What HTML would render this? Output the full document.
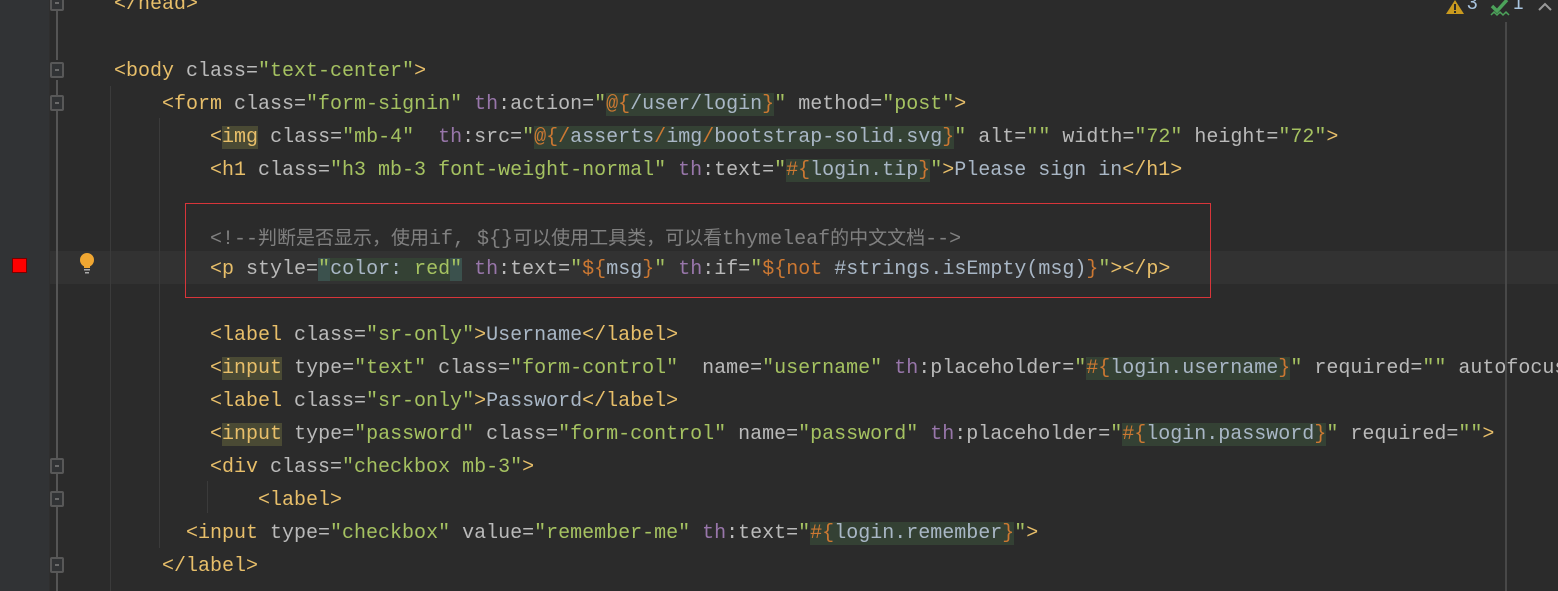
<!DOCTYPE html>
<html style="overflow:hidden;height:591px"><head><meta charset="utf-8"><style>
html,body{overflow:hidden}
body{margin:0;width:1558px;height:591px;overflow:hidden;background:#2b2b2b;position:relative;font-family:"Liberation Mono","Noto Sans CJK SC",monospace;font-size:20px;}
.g{position:absolute;left:0;top:0;width:49px;height:591px;background:#313335;}
.sep{position:absolute;left:49px;top:0;width:1px;height:591px;background:#2f2f2f;}
.cur{position:absolute;left:50px;top:251px;width:1508px;height:33px;background:#323232;}
.l{position:absolute;left:114px;height:33px;line-height:33px;white-space:pre;color:#a9b7c6;margin-top:2px}
.t{color:#e8bf6a}.a{color:#bababa}.s{color:#a5c261}.n{color:#9876aa}.o{color:#cc7832}.c{color:#808080}
.e{background:#344134}.h{background:#4a4a34}.q{background:#3b514d}
.cj{font-family:"Noto Sans CJK SC",sans-serif;font-size:19px}
.ig{position:absolute;width:1px;background:#3b3b3b}
.fold{position:absolute;left:50px;width:14px;height:16px;border:2px solid #585858;border-radius:2px;box-sizing:border-box;background:#313335}
.fold:after{content:"";position:absolute;left:3px;top:5px;width:4px;height:2px;background:#6a6a6a}
.fl{position:absolute;left:56px;width:2px;background:#555}
.box{position:absolute;left:185px;top:203px;width:1026px;height:95px;border:1px solid #d8353a;box-sizing:border-box}
</style></head><body>
<div class="g"></div><div class="sep"></div>
<div class="cur"></div>
<div class="fl" style="top:10px;height:50px"></div>
<div class="fl" style="top:80px;height:511px"></div>
<div class="fold" style="top:-5px"></div>
<div class="fold" style="top:62px"></div>
<div class="fold" style="top:95px"></div>
<div class="fold" style="top:458px"></div>
<div class="fold" style="top:491px"></div>
<div class="fold" style="top:557px"></div>
<div class="ig" style="left:110px;top:86px;height:505px"></div>
<div class="ig" style="left:159px;top:118px;height:430px"></div>
<div class="ig" style="left:207px;top:481px;height:32px"></div>
<div style="position:absolute;left:12px;top:258px;width:15px;height:15px;background:#f00;border:1px solid #700;box-sizing:border-box"></div>
<svg style="position:absolute;left:78px;top:252px" width="20" height="24" viewBox="0 0 20 24"><circle cx="9" cy="8" r="7" fill="#f0a732"/><rect x="6" y="13" width="6" height="3" fill="#f0a732"/><rect x="6" y="17" width="6" height="1.5" fill="#aaa"/><rect x="7" y="20" width="4" height="1.5" fill="#aaa"/></svg>
<div class="box"></div>
<div style="position:absolute;left:1505px;top:22px;width:2px;height:569px;background:#484848"></div>
<svg style="position:absolute;left:1446px;top:0" width="18" height="15"><polygon points="9,0 18,14 0,14" fill="#c99a1e"/><rect x="8" y="4" width="2" height="6" fill="#2b2b2b"/><rect x="8" y="11" width="2" height="2" fill="#2b2b2b"/></svg>
<div style="position:absolute;left:1467px;top:-7px;color:#a9c4df;font-family:'Liberation Sans',sans-serif;font-size:19px">3</div>
<svg style="position:absolute;left:1490px;top:0" width="20" height="18"><path d="M2 6 L7 11 L17 0" stroke="#4ca25a" stroke-width="3.5" fill="none"/><path d="M1 15 l3-3 3 3 3-3 3 3 3-3 3 3" stroke="#4ca25a" stroke-width="1.5" fill="none"/></svg>
<div style="position:absolute;left:1513px;top:-7px;color:#a9c4df;font-family:'Liberation Sans',sans-serif;font-size:19px">1</div>
<svg style="position:absolute;left:1538px;top:2px" width="14" height="10"><path d="M1 8 L7 2 L13 8" stroke="#999" stroke-width="2" fill="none"/></svg>

<div class="l" style="top:-14px"><span class="t">&lt;/head&gt;</span></div>
<div class="l" style="top:53px"><span class="t">&lt;body </span><span class="a">class=</span><span class="s">"text-center"</span><span class="t">&gt;</span></div>
<div class="l" style="top:86px">    <span class="t">&lt;form </span><span class="a">class=</span><span class="s">"form-signin" </span><span class="n">th</span><span class="a">:action=</span><span class="s">"</span><span class="e"><span class="o">@{</span>/user/login<span class="o">}</span></span><span class="s">" </span><span class="a">method=</span><span class="s">"post"</span><span class="t">&gt;</span></div>
<div class="l" style="top:119px">        <span class="t">&lt;<span class="h">img</span> </span><span class="a">class=</span><span class="s">"mb-4"  </span><span class="n">th</span><span class="a">:src=</span><span class="s">"</span><span class="e"><span class="o">@{/</span>asserts<span class="o">/</span>img<span class="o">/</span>bootstrap-solid.svg<span class="o">}</span></span><span class="s">" </span><span class="a">alt=</span><span class="s">"" </span><span class="a">width=</span><span class="s">"72" </span><span class="a">height=</span><span class="s">"72"</span><span class="t">&gt;</span></div>
<div class="l" style="top:152px">        <span class="t">&lt;h1 </span><span class="a">class=</span><span class="s">"h3 mb-3 font-weight-normal" </span><span class="n">th</span><span class="a">:text=</span><span class="s">"</span><span class="e"><span class="o">#{</span>login.tip<span class="o">}</span></span><span class="s">"</span><span class="t">&gt;</span>Please sign in<span class="t">&lt;/h1&gt;</span></div>
<div class="l c" style="top:218px">        &lt;!--<span class="cj">判断是否显示，使用</span>if, ${}<span class="cj">可以使用工具类，可以看</span>thymeleaf<span class="cj">的中文文档</span>--&gt;</div>
<div class="l" style="top:251px">        <span class="t">&lt;p </span><span class="a">style=</span><span class="q s">"</span><span class="e">color: <span class="s">red</span></span><span class="q s">"</span> <span class="n">th</span><span class="a">:text=</span><span class="s">"</span><span class="o">${</span>msg<span class="o">}</span><span class="s">" </span><span class="n">th</span><span class="a">:if=</span><span class="s">"</span><span class="o">${not </span>#strings.isEmpty(msg)<span class="o">}</span><span class="s">"</span><span class="t">&gt;&lt;/p&gt;</span></div>
<div class="l" style="top:317px">        <span class="t">&lt;label </span><span class="a">class=</span><span class="s">"sr-only"</span><span class="t">&gt;</span>Username<span class="t">&lt;/label&gt;</span></div>
<div class="l" style="top:350px">        <span class="t">&lt;<span class="h">input</span> </span><span class="a">type=</span><span class="s">"text" </span><span class="a">class=</span><span class="s">"form-control"  </span><span class="a">name=</span><span class="s">"username" </span><span class="n">th</span><span class="a">:placeholder=</span><span class="s">"</span><span class="e"><span class="o">#{</span>login.username<span class="o">}</span></span><span class="s">" </span><span class="a">required=</span><span class="s">"" </span><span class="a">autofocus</span></div>
<div class="l" style="top:383px">        <span class="t">&lt;label </span><span class="a">class=</span><span class="s">"sr-only"</span><span class="t">&gt;</span>Password<span class="t">&lt;/label&gt;</span></div>
<div class="l" style="top:416px">        <span class="t">&lt;<span class="h">input</span> </span><span class="a">type=</span><span class="s">"password" </span><span class="a">class=</span><span class="s">"form-control" </span><span class="a">name=</span><span class="s">"password" </span><span class="n">th</span><span class="a">:placeholder=</span><span class="s">"</span><span class="e"><span class="o">#{</span>login.password<span class="o">}</span></span><span class="s">" </span><span class="a">required=</span><span class="s">""</span><span class="t">&gt;</span></div>
<div class="l" style="top:449px">        <span class="t">&lt;div </span><span class="a">class=</span><span class="s">"checkbox mb-3"</span><span class="t">&gt;</span></div>
<div class="l" style="top:482px">            <span class="t">&lt;label&gt;</span></div>
<div class="l" style="top:515px">      <span class="t">&lt;input </span><span class="a">type=</span><span class="s">"checkbox" </span><span class="a">value=</span><span class="s">"remember-me" </span><span class="n">th</span><span class="a">:text=</span><span class="s">"</span><span class="e"><span class="o">#{</span>login.remember<span class="o">}</span></span><span class="s">"</span><span class="t">&gt;</span></div>
<div class="l" style="top:548px">    <span class="t">&lt;/label&gt;</span></div>
</body></html>
